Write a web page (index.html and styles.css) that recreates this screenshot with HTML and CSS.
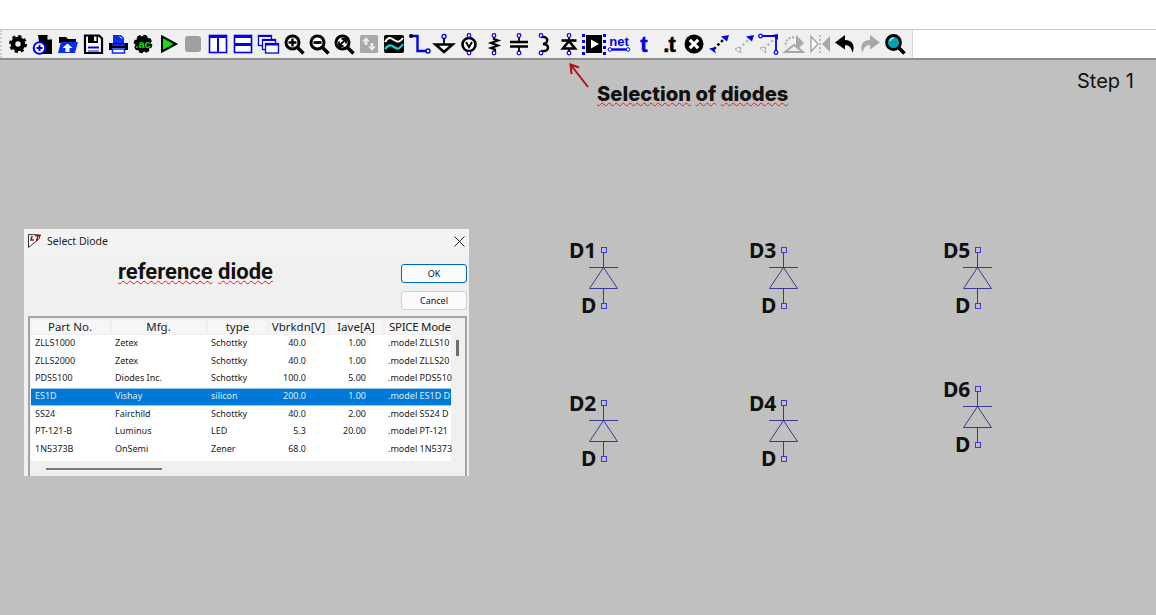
FILE: index.html
```html
<!DOCTYPE html>
<html lang="en">
<head>
    <meta charset="UTF-8">
    <meta name="viewport" content="width=device-width, initial-scale=1.0">
    <title>Select Diode</title>
    <link rel="stylesheet" href="styles.css">
</head>
<body>
    <div class="topbar"></div>
    <div class="toolbar-row">
        <div class="toolbar">
            <!-- settings -->
            <svg class="ic" viewBox="0 0 24 24"><circle cx="12" cy="12" r="5" fill="none" stroke="#000" stroke-width="4.600"/><circle cx="12" cy="12" r="7.800" fill="none" stroke="#000" stroke-width="2.400" stroke-dasharray="3.200 2.930"/></svg>
            <!-- new schematic -->
            <svg class="ic" viewBox="0 0 24 24"><path d="M7 3h9l5 5v14H10z" fill="#000"/><path d="M16 3v5h5" fill="#fff" stroke="#000"/><circle cx="8.500" cy="16" r="5.800" fill="#fff" stroke="#0000ee" stroke-width="2"/><path d="M5.500 16h6M8.500 13v6" stroke="#0000ee" stroke-width="2"/></svg>
            <!-- open -->
            <svg class="ic" viewBox="0 0 24 24"><path d="M3 5h7l2 2h8v4H3z" fill="#000"/><path d="M5 10h17l-3 11H2z" fill="#0a2cf0"/><path d="M11.500 11.500l5 4.500h-3v4h-4v-4h-3z" fill="#fff"/></svg>
            <!-- save -->
            <svg class="ic" viewBox="0 0 24 24"><path d="M4 3.500h14l3 3v14.500H4z" fill="#fff" stroke="#000" stroke-width="2.200"/><path d="M7 3h10v8H7z" fill="#000"/><path d="M13 4.500h2.500v4.500H13z" fill="#f0f0f0"/><path d="M7 14.500h11v2H7z" fill="#0000ee"/><path d="M7 18.500h11v1H7z" fill="#0000ee"/></svg>
            <!-- print -->
            <svg class="ic" viewBox="0 0 24 24"><path d="M7 3h8l3 3v5H7z" fill="#0a2cf0"/><path d="M13.500 4.500l2.500 2" stroke="#fff"/><path d="M3 11h19v7h-3v-2H6v2H3z" fill="#000"/><path d="M6 11.500h13v2.500H6z" fill="#0a2cf0"/><path d="M6.500 17h12v4h-12z" fill="#fff" stroke="#0a2cf0" stroke-width="1.500"/></svg>
            <!-- .ac -->
            <svg class="ic" viewBox="0 0 24 24"><circle cx="12" cy="12" r="8" fill="#000"/><circle cx="12" cy="12" r="8.400" fill="none" stroke="#000" stroke-width="1.800" stroke-dasharray="4 2.600"/><text class="ac-text" x="12" y="15.500" text-anchor="middle">.ac</text></svg>
            <!-- run -->
            <svg class="ic" viewBox="0 0 24 24"><path d="M6 4.500l14 7.500-14 7.500z" fill="#10e010" stroke="#000" stroke-width="2"/></svg>
            <!-- halt -->
            <svg class="ic" viewBox="0 0 24 24"><rect x="4" y="4" width="16" height="16" rx="3" fill="#a0a0a0"/></svg>
            <!-- tile vertical -->
            <svg class="ic" viewBox="0 0 24 24"><rect x="3.500" y="3.500" width="17" height="17" fill="#fff" stroke="#0000ee" stroke-width="1.600"/><path d="M3 3h18v3H3z" fill="#0000ee"/><path d="M11 4h2v16h-2z" fill="#0000ee"/></svg>
            <!-- tile horizontal -->
            <svg class="ic" viewBox="0 0 24 24"><rect x="3.500" y="3.500" width="17" height="17" fill="#fff" stroke="#0000ee" stroke-width="1.600"/><path d="M3 3h18v3H3zM3 11h18v3H3z" fill="#0000ee"/></svg>
            <!-- cascade -->
            <svg class="ic" viewBox="0 0 24 24"><g fill="#fff" stroke="#0000ee" stroke-width="1.300"><rect x="2.500" y="3.500" width="13" height="10"/><rect x="6.500" y="7.500" width="13" height="10"/><rect x="9.500" y="11.500" width="13" height="9.500"/></g><path d="M2 3h14v2H2zM6 7h14v2H6zM9 11h14v2.500H9z" fill="#0000ee"/></svg>
            <!-- zoom in -->
            <svg class="ic" viewBox="0 0 24 24"><circle cx="10.500" cy="10.500" r="6.500" fill="#fff" stroke="#000" stroke-width="3"/><path d="M15.500 15.500l6 6" stroke="#000" stroke-width="3.600"/><path d="M6.500 10.500h8M10.500 6.500v8" stroke="#000" stroke-width="2.400"/></svg>
            <!-- zoom out -->
            <svg class="ic" viewBox="0 0 24 24"><circle cx="10.500" cy="10.500" r="6.500" fill="#fff" stroke="#000" stroke-width="3"/><path d="M15.500 15.500l6 6" stroke="#000" stroke-width="3.600"/><path d="M6.500 10.500h8" stroke="#000" stroke-width="2.800"/></svg>
            <!-- zoom full -->
            <svg class="ic" viewBox="0 0 24 24"><circle cx="10.500" cy="10.500" r="6.500" fill="#fff" stroke="#000" stroke-width="3"/><path d="M15.500 15.500l6 6" stroke="#000" stroke-width="3.600"/><path d="M7.500 13.500l6-6M9.500 7h4.500v4.500M7 9.500V14h4.500" fill="none" stroke="#000" stroke-width="1.800"/></svg>
            <!-- autorange -->
            <svg class="ic" viewBox="0 0 24 24"><rect x="3" y="3" width="18" height="18" rx="1.500" fill="#a8a8a8"/><path d="M9 5l4 4.500h-2.500V13h-3V9.500H5zM15 19l-4-4.500h2.500V11h3v3.500H19z" fill="#e8e8e8"/></svg>
            <!-- waveform -->
            <svg class="ic" viewBox="0 0 24 24"><rect x="2" y="3" width="20" height="18" rx="2" fill="#000"/><path d="M3 10c4-6 6-4 9-2s5 3 9-2" fill="none" stroke="#fff" stroke-width="2"/><path d="M3 17c4-5 6-4 9-2s5 3 9-3" fill="none" stroke="#15d6d6" stroke-width="2.200"/></svg>
            <!-- wire -->
            <svg class="ic" viewBox="0 0 24 24"><path d="M4 4h6.500v15H21" fill="none" stroke="#0000ee" stroke-width="2.400"/><circle cx="4" cy="4" r="2" fill="#000"/><circle cx="21" cy="19" r="2" fill="#fff" stroke="#0000ee" stroke-width="1.400"/></svg>
            <!-- ground -->
            <svg class="ic" viewBox="0 0 24 24"><circle cx="12" cy="4.500" r="2" fill="#fff" stroke="#0000ee" stroke-width="1.300"/><path d="M12 6.500v6" stroke="#000" stroke-width="1.800"/><path d="M3.500 12.500h17l-8.500 7.500z" fill="#fff" stroke="#000" stroke-width="2.600"/></svg>
            <!-- label -->
            <svg class="ic" viewBox="0 0 24 24"><circle cx="12" cy="12.500" r="6.500" fill="#fff" stroke="#000" stroke-width="2.600"/><path d="M9 10l3 5 3-5" fill="none" stroke="#000" stroke-width="2"/><g fill="#fff" stroke="#0000ee" stroke-width="1.200"><circle cx="12" cy="3.500" r="1.800"/><circle cx="12" cy="21" r="1.800"/></g></svg>
            <!-- resistor -->
            <svg class="ic" viewBox="0 0 24 24"><path d="M12 5v2l4 1.500-7 2.500 7 2.500-7 2.500 4 1.500v2" fill="none" stroke="#000" stroke-width="2.200"/><g fill="#fff" stroke="#0000ee" stroke-width="1.200"><circle cx="12" cy="3.500" r="1.800"/><circle cx="12" cy="21" r="1.800"/></g></svg>
            <!-- capacitor -->
            <svg class="ic" viewBox="0 0 24 24"><path d="M12 5v5M12 15v5" stroke="#000" stroke-width="1.800"/><path d="M3 10h18M3 14.500h18" stroke="#000" stroke-width="2.400"/><g fill="#fff" stroke="#0000ee" stroke-width="1.200"><circle cx="12" cy="3.500" r="1.800"/><circle cx="12" cy="21" r="1.800"/></g></svg>
            <!-- inductor -->
            <svg class="ic" viewBox="0 0 24 24"><path d="M9 5c8-1 8 6 2 7 7 0 7 8-2 7" fill="none" stroke="#000" stroke-width="2.400"/><g fill="#fff" stroke="#0000ee" stroke-width="1.200"><circle cx="9" cy="3.500" r="1.800"/><circle cx="9" cy="21" r="1.800"/></g></svg>
            <!-- diode -->
            <svg class="ic" viewBox="0 0 24 24"><path d="M12 5v15" stroke="#000" stroke-width="2"/><path d="M4.500 8.500h15" stroke="#000" stroke-width="2.600"/><path d="M6 16.500h12L12 9z" fill="#f0f0f0" stroke="#000" stroke-width="2.600"/><g fill="#fff" stroke="#0000ee" stroke-width="1.200"><circle cx="12" cy="3.500" r="1.800"/><circle cx="12" cy="21" r="1.800"/></g></svg>
            <!-- component -->
            <svg class="ic" viewBox="0 0 24 24"><path d="M4 3h16v18H4z" fill="#000"/><path d="M9 7.500l8 4.500-8 4.500z" fill="#fff"/><g fill="#0000ee"><rect x="0" y="2" width="3" height="3"/><rect x="0" y="8" width="3" height="3"/><rect x="0" y="14" width="3" height="3"/><rect x="0" y="20" width="3" height="3"/><rect x="21" y="2" width="3" height="3"/><rect x="21" y="8" width="3" height="3"/><rect x="21" y="14" width="3" height="3"/><rect x="21" y="20" width="3" height="3"/></g></svg>
            <!-- net -->
            <svg class="ic" viewBox="0 0 24 24"><text class="net-text" x="12" y="14" text-anchor="middle">net</text><path d="M4 17.500h16" stroke="#0000ee" stroke-width="2.400"/><circle cx="3" cy="17.500" r="1.800" fill="#fff" stroke="#0000ee"/><circle cx="21" cy="17.500" r="1.800" fill="#fff" stroke="#0000ee"/></svg>
            <!-- text -->
            <svg class="ic" viewBox="0 0 24 24"><text class="t-text t-blue" x="12" y="19.500" text-anchor="middle">t</text></svg>
            <!-- spice directive -->
            <svg class="ic" viewBox="0 0 24 24"><text class="t-text t-dot" x="12" y="19.500" text-anchor="middle">.t</text></svg>
            <!-- delete -->
            <svg class="ic" viewBox="0 0 24 24"><circle cx="12" cy="12" r="9.500" fill="#000"/><path d="M7.800 7.800l8.400 8.400M16.200 7.800l-8.400 8.400" stroke="#fff" stroke-width="3.200"/></svg>
            <!-- duplicate -->
            <svg class="ic" viewBox="0 0 24 24"><path d="M7 17l10-10" stroke="#000" stroke-width="2.400" stroke-dasharray="2.500 2.500"/><path d="M2 16.500l7 5-2-6zM22 3l-8 1.500 6 5z" fill="#0000ee"/></svg>
            <!-- move, off -->
            <svg class="ic" viewBox="0 0 24 24"><path d="M7 17l10-10" stroke="#b0b0b0" stroke-width="2" stroke-dasharray="2.500 2.500"/><path d="M3 17l6 4-1.500-6z" fill="#fff" stroke="#a8a8a8"/><path d="M22 3l-8 1.500 6 5z" fill="#0000ee"/></svg>
            <!-- drag, off -->
            <svg class="ic" viewBox="0 0 24 24"><path d="M4 4h15v15" fill="none" stroke="#0000ee" stroke-width="1.800"/><path d="M7 17l9-9" stroke="#b0b0b0" stroke-width="2" stroke-dasharray="2.500 2.500"/><path d="M3 16l6 5-1.500-6z" fill="#fff" stroke="#a8a8a8"/><path d="M21 2v6l-6-5z" fill="#0000ee"/><circle cx="3.500" cy="4" r="1.800" fill="#fff" stroke="#0000ee" stroke-width="1.300"/><circle cx="19" cy="20.500" r="1.800" fill="#fff" stroke="#0000ee" stroke-width="1.300"/></svg>
            <!-- rotate, off -->
            <svg class="ic" viewBox="0 0 24 24"><path d="M14 3l8 8-8 8z" fill="#a8a8a8"/><path d="M3 20l9-7 9 7z" fill="#f0f0f0" stroke="#a8a8a8" stroke-width="2"/><path d="M12 5.500a7 7 0 0 0-8 9" fill="none" stroke="#a8a8a8" stroke-width="2" stroke-dasharray="2 1.500"/></svg>
            <!-- mirror, off -->
            <svg class="ic" viewBox="0 0 24 24"><path d="M12 3v18" stroke="#a8a8a8" stroke-width="1.500" stroke-dasharray="2 2"/><path d="M3 4.500l7 7.500-7 7.500z" fill="#fff" stroke="#a8a8a8" stroke-width="1.500"/><path d="M22 4v16l-8-8z" fill="#a8a8a8"/></svg>
            <!-- undo -->
            <svg class="ic" viewBox="0 0 24 24"><path d="M12 3L2 10.500l10 7v-4.300c4 0 6 1.500 7.500 7.500 3-7 0-12.500-7.500-12.700z" fill="#000"/></svg>
            <!-- redo, off -->
            <svg class="ic" viewBox="0 0 24 24"><path d="M12 3l10 7.500-10 7v-4.300c-4 0-6 1.500-7.500 7.500-3-7 0-12.500 7.500-12.700z" fill="#a8a8a8"/></svg>
            <!-- find -->
            <svg class="ic" viewBox="0 0 24 24"><circle cx="10.500" cy="10.500" r="7" fill="#0aa0b0" stroke="#000" stroke-width="2.800"/><path d="M15.500 15.500l6 6" stroke="#000" stroke-width="3.600"/><path d="M7 9a4 4 0 0 1 4-3" fill="none" stroke="#8ff0f0" stroke-width="1.500"/></svg>
        </div>
        <div class="toolbar-rest"></div>
    </div>

    <div class="canvas">
        <div class="step">Step 1</div>

        <svg class="arrow" viewBox="0 0 24 28"><path d="M20 24L2.500 1.500M3.500 11L2.500 1.500 11 4.500" fill="none" stroke="#b01018" stroke-width="2"/></svg>
        <div class="note"><span class="squiggle">Selection</span> <span class="squiggle">of</span> <span class="squiggle">diodes</span></div>

        <div class="dialog">
            <div class="dialog-title">
                <svg class="lt-logo" viewBox="0 0 16 16"><path d="M1.500 1.500v13l11-9V2z" fill="#fff" stroke="#333"/><path d="M5 3l-1 4h3M8 2.500h6M11 2.500L9.500 8" fill="none" stroke="#a01010" stroke-width="1.600"/></svg>
                <span>Select Diode</span>
                <svg class="close" viewBox="0 0 11 11"><path d="M.5.500l10 10M10.500.500l-10 10" stroke="#222"/></svg>
            </div>
            <div class="dialog-head">
                <div class="ref-diode"><span class="squiggle">reference</span> <span class="squiggle">diode</span></div>
                <div class="buttons">
                    <button class="btn btn-ok">OK</button>
                    <button class="btn">Cancel</button>
                </div>
            </div>
            <div class="list">
                <div class="list-main">
                    <div class="row row-head">
                        <span class="c-part">Part No.</span>
                        <span class="c-mfg">Mfg.</span>
                        <span class="c-type">type</span>
                        <span class="c-v">Vbrkdn[V]</span>
                        <span class="c-i">Iave[A]</span>
                        <span class="c-model">SPICE Mode</span>
                    </div>
                    <div class="rows">
                        <div class="row"><span class="c-part">ZLLS1000</span><span class="c-mfg">Zetex</span><span class="c-type">Schottky</span><span class="c-v">40.0</span><span class="c-i">1.00</span><span class="c-model">.model ZLLS10</span></div>
                        <div class="row"><span class="c-part">ZLLS2000</span><span class="c-mfg">Zetex</span><span class="c-type">Schottky</span><span class="c-v">40.0</span><span class="c-i">1.00</span><span class="c-model">.model ZLLS20</span></div>
                        <div class="row"><span class="c-part">PDS5100</span><span class="c-mfg">Diodes Inc.</span><span class="c-type">Schottky</span><span class="c-v">100.0</span><span class="c-i">5.00</span><span class="c-model">.model PDS510</span></div>
                        <div class="row selected"><span class="c-part">ES1D</span><span class="c-mfg">Vishay</span><span class="c-type">silicon</span><span class="c-v">200.0</span><span class="c-i">1.00</span><span class="c-model">.model ES1D D</span></div>
                        <div class="row"><span class="c-part">SS24</span><span class="c-mfg">Fairchild</span><span class="c-type">Schottky</span><span class="c-v">40.0</span><span class="c-i">2.00</span><span class="c-model">.model SS24 D</span></div>
                        <div class="row"><span class="c-part">PT-121-B</span><span class="c-mfg">Luminus</span><span class="c-type">LED</span><span class="c-v">5.3</span><span class="c-i">20.00</span><span class="c-model">.model PT-121</span></div>
                        <div class="row"><span class="c-part">1N5373B</span><span class="c-mfg">OnSemi</span><span class="c-type">Zener</span><span class="c-v">68.0</span><span class="c-i"></span><span class="c-model">.model 1N5373</span></div>
                    </div>
                </div>
                <div class="scroll-v"><div class="thumb-v"></div></div>
                <div class="scroll-h"><div class="thumb-h"></div></div>
            </div>
        </div>

        <svg class="diode d1" viewBox="0 -12 64 88"><text class="ref" x="0" y="11">D1</text><text class="ref" x="12" y="66">D</text><g class="sym"><rect x="32.500" y="0.500" width="5" height="5"/><path d="M34.500 5.500v15M20 20.500h29M34.500 20.500L20.500 41.500h28zM34.500 41.500v15"/><rect x="32.500" y="56.500" width="5" height="5"/></g></svg>
        <svg class="diode d3" viewBox="0 -12 64 88"><text class="ref" x="0" y="11">D3</text><text class="ref" x="12" y="66">D</text><g class="sym"><rect x="32.500" y="0.500" width="5" height="5"/><path d="M34.500 5.500v15M20 20.500h29M34.500 20.500L20.500 41.500h28zM34.500 41.500v15"/><rect x="32.500" y="56.500" width="5" height="5"/></g></svg>
        <svg class="diode d5" viewBox="0 -12 64 88"><text class="ref" x="0" y="11">D5</text><text class="ref" x="12" y="66">D</text><g class="sym"><rect x="32.500" y="0.500" width="5" height="5"/><path d="M34.500 5.500v15M20 20.500h29M34.500 20.500L20.500 41.500h28zM34.500 41.500v15"/><rect x="32.500" y="56.500" width="5" height="5"/></g></svg>
        <svg class="diode d2" viewBox="0 -12 64 88"><text class="ref" x="0" y="11">D2</text><text class="ref" x="12" y="66">D</text><g class="sym"><rect x="32.500" y="0.500" width="5" height="5"/><path d="M34.500 5.500v15M20 20.500h29M34.500 20.500L20.500 41.500h28zM34.500 41.500v15"/><rect x="32.500" y="56.500" width="5" height="5"/></g></svg>
        <svg class="diode d4" viewBox="0 -12 64 88"><text class="ref" x="0" y="11">D4</text><text class="ref" x="12" y="66">D</text><g class="sym"><rect x="32.500" y="0.500" width="5" height="5"/><path d="M34.500 5.500v15M20 20.500h29M34.500 20.500L20.500 41.500h28zM34.500 41.500v15"/><rect x="32.500" y="56.500" width="5" height="5"/></g></svg>
        <svg class="diode d6" viewBox="0 -12 64 88"><text class="ref" x="0" y="11">D6</text><text class="ref" x="12" y="66">D</text><g class="sym"><rect x="32.500" y="0.500" width="5" height="5"/><path d="M34.500 5.500v15M20 20.500h29M34.500 20.500L20.500 41.500h28zM34.500 41.500v15"/><rect x="32.500" y="56.500" width="5" height="5"/></g></svg>
    </div>
</body>
</html>
```

FILE: styles.css
```css
html, body {
    margin: 0;
    height: 100%;
    overflow: hidden;
}
body {
    display: flex;
    flex-direction: column;
    background-color: #fff;
    font-family: "Noto Sans", sans-serif;
}
.topbar {
    height: 29px;
    background: #fff;
}
.toolbar-row {
    display: flex;
    height: 31px;
    border-top: 1px solid #c9c9c9;
    border-bottom: 2px solid #8c8c8c;
    box-sizing: border-box;
}
.toolbar {
    display: flex;
    align-items: center;
    gap: 1.060px;
    width: 913px;
    padding-left: 4px;
    box-sizing: border-box;
    background: #f0f0f0;
    border-left: 2px dotted #cfcfcf;
    border-right: 1px solid #d8d8d8;
}
.toolbar-rest {
    flex: 1;
    background: #fff;
}
.ic {
    width: 24px;
    height: 24px;
    flex: none;
}
.ac-text {
    font: bold 11px "Liberation Sans", sans-serif;
    fill: #14e014;
}
.net-text {
    font: bold 13px "Liberation Sans", sans-serif;
    fill: #0000ee;
}
.t-text {
    font: bold 22px "Liberation Sans", sans-serif;
    fill: #000;
    stroke: #000;
    stroke-width: 0.5px;
}
.t-blue {
    fill: #0000ee;
    stroke: #0000ee;
}
.t-dot {
    letter-spacing: -1px;
}

.canvas {
    position: relative;
    flex: 1;
    background: #c0c0c0;
}
.step {
    position: absolute;
    left: 1077px;
    top: 9px;
    font: 20px "Inter", sans-serif;
    color: #111;
}
.arrow {
    position: absolute;
    left: 568px;
    top: 3px;
    width: 24px;
    height: 28px;
}
.note {
    position: absolute;
    left: 597px;
    top: 21px;
    font: 800 20.200px "Inter", sans-serif;
    color: #111;
    white-space: nowrap;
}
.squiggle {
    text-decoration: underline wavy #e02020 1px;
}

/* dialog window */
.dialog {
    position: absolute;
    left: 24px;
    top: 169px;
    width: 445px;
    height: 247px;
    display: flex;
    flex-direction: column;
    background: #f0f0f0;
    font-family: "Noto Sans", sans-serif;
}
.dialog-title {
    display: flex;
    align-items: center;
    height: 26px;
    padding: 0 4px 2px 3px;
    box-sizing: border-box;
    font-size: 10.500px;
    color: #222;
    background: #f3f3f3;
}
.lt-logo {
    width: 16px;
    height: 16px;
    margin-right: 4px;
}
.close {
    width: 11px;
    height: 11px;
    margin-left: auto;
}
.dialog-head {
    display: flex;
    justify-content: space-between;
    height: 61px;
    padding: 4px 2px 0 94px;
    box-sizing: border-box;
}
.ref-diode {
    font: bold 22px "Roboto", sans-serif;
    color: #111;
    line-height: 26px;
}
.buttons {
    display: flex;
    flex-direction: column;
    gap: 8px;
    padding-top: 5px;
}
.btn {
    width: 66px;
    height: 19px;
    padding: 0;
    font: 9px "Noto Sans", sans-serif;
    color: #111;
    background: #fbfbfb;
    border: 1px solid #d0d0d0;
    border-radius: 3px;
}
.btn-ok {
    border: 1px solid #0067c0;
}
.list {
    position: relative;
    flex: 1;
    margin: 0 2px 0 4px;
    border: 2px solid #a4a4a4;
    border-bottom: 0;
    background: #f0f0f0;
}
.list-main {
    display: flex;
    flex-direction: column;
    width: 420px;
    height: 143px;
    margin-left: 1px;
}
.rows {
    flex: 1;
    background: #fff;
}
.row {
    display: flex;
    height: 17.700px;
    line-height: 15px;
    padding-left: 4px;
    font-size: 9px;
    color: #222;
    white-space: nowrap;
}
.row-head {
    flex: none;
    height: 14px;
    line-height: 14px;
    margin: 2px 0 1px;
    padding-left: 0;
    font-size: 11.500px;
}
.row-head span {
    margin-right: 3px;
    text-align: center;
    background: #f6f6f6;
}
.selected {
    background: #0078d7;
    color: #dfeefb;
    box-shadow: inset 0 1px 0 #9cc8ee, inset 0 -1px 0 #9cc8ee;
}
.c-part { flex: none; width: 80px; }
.c-mfg { flex: none; width: 96px; }
.c-type { flex: none; width: 60px; }
.c-v { flex: none; width: 35px; text-align: right; }
.c-i { flex: none; width: 60px; text-align: right; }
.c-model { flex: none; padding-left: 22px; }
.row-head .c-part { width: 78px; }
.row-head .c-mfg { width: 93px; }
.row-head .c-type { width: 59px; }
.row-head .c-v { width: 57px; }
.row-head .c-i { width: 52px; }
.row-head .c-model {
    width: 62px;
    margin-right: 0;
    padding-left: 4px;
    text-align: left;
    letter-spacing: -0.3px;
}
.scroll-v {
    position: absolute;
    right: 6px;
    top: 22px;
    width: 3px;
}
.thumb-v {
    height: 16px;
    background: #6e6e6e;
}
.scroll-h {
    position: absolute;
    left: 16px;
    bottom: 6px;
}
.thumb-h {
    width: 116px;
    height: 2px;
    background: #7a7a7a;
}

/* diode symbols on the schematic */
.diode {
    position: absolute;
    width: 64px;
    height: 88px;
}
.ref {
    font: bold 21px "Noto Sans", sans-serif;
    fill: #111;
}
.sym rect, .sym path {
    fill: none;
    stroke: #3a3a96;
    stroke-width: 1;
}
.sym rect {
    stroke: #3c3cd0;
}
.d1 { left: 569px; top: 175px; }
.d3 { left: 749px; top: 175px; }
.d5 { left: 943px; top: 175px; }
.d2 { left: 569px; top: 328px; }
.d4 { left: 749px; top: 328px; }
.d6 { left: 943px; top: 314px; }
```
